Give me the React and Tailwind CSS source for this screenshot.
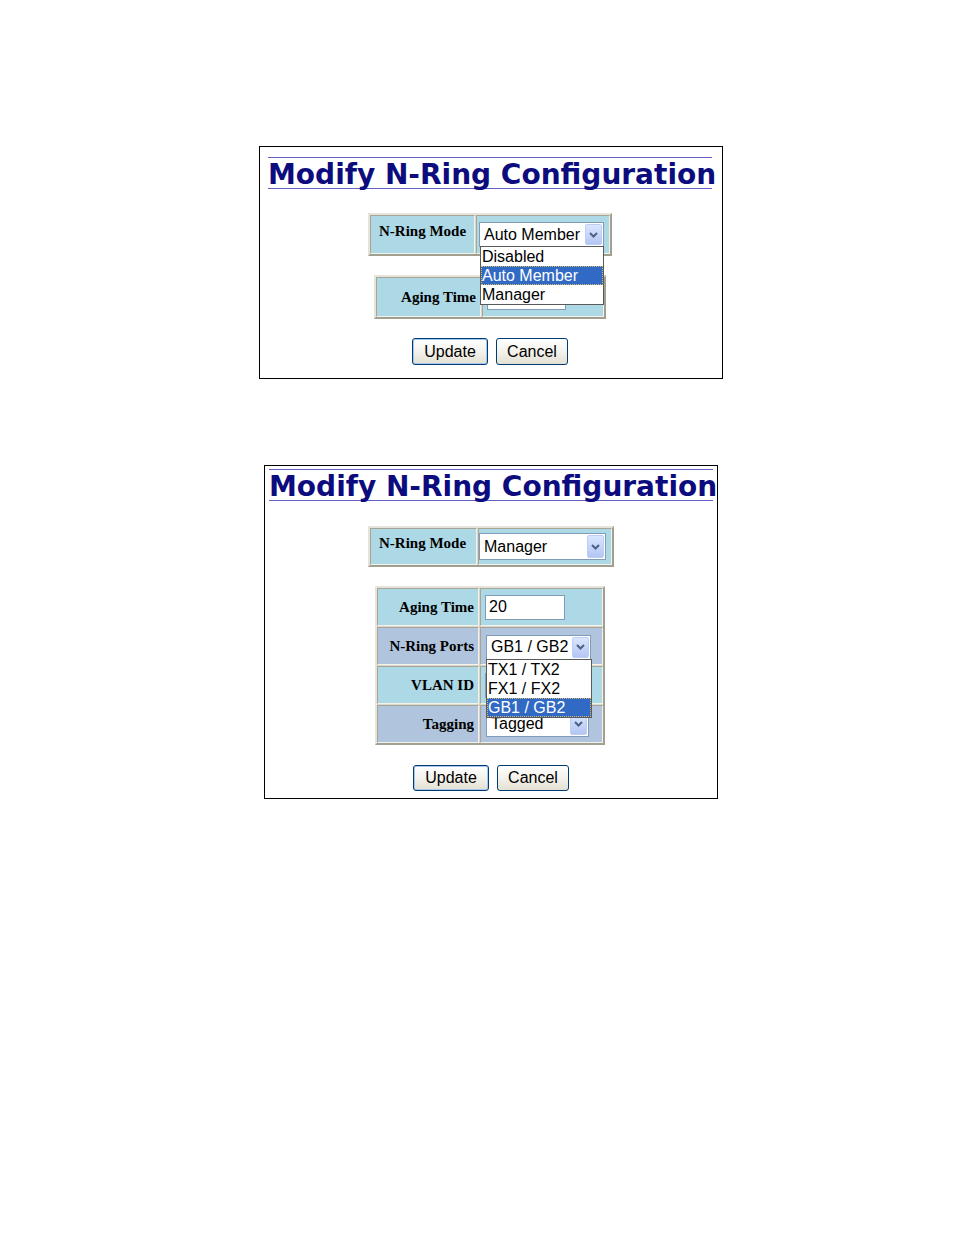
const SANS = "font-['Liberation_Sans',Arial,sans-serif]";
const SERIF = "font-['Liberation_Serif','Times_New_Roman',serif]";
const HEAD = "font-['DejaVu_Sans',Verdana,sans-serif]";

const BLUE = "bg-[#add8e6]";
const STEEL = "bg-[#b0c4de]";

function Heading({ className = "" }) {
  return (
    <h1
      className={`w-[444px] border-t border-b border-[#6262c6] pt-[4px] text-center ${HEAD} text-[28px] font-bold leading-[26px] text-[#0c0c7e] whitespace-nowrap ${className}`}
    >
      Modify N-Ring Configuration
    </h1>
  );
}

function Frame({ className = "", children }) {
  return (
    <div
      className={`border-2 border-t-[#e6e4da] border-l-[#e6e4da] border-r-[#a19f8f] border-b-[#a19f8f] bg-[#d9d7cb] ${className}`}
    >
      {children}
    </div>
  );
}

function Cell({ className = "", children }) {
  return (
    <div
      className={`border border-t-[#a7a595] border-l-[#a7a595] border-r-[#f2f1ea] border-b-[#f2f1ea] ${className}`}
    >
      {children}
    </div>
  );
}

function Label({ children }) {
  return (
    <span className={`${SERIF} text-[15px] font-bold leading-[18px] text-black whitespace-nowrap`}>
      {children}
    </span>
  );
}

function Chevron() {
  return (
    <svg width="9" height="6" viewBox="0 0 9 6">
      <path d="M1 1 L4.5 4.5 L8 1" fill="none" stroke="#4d6185" strokeWidth="2" />
    </svg>
  );
}

function Select({ className = "", value, children }) {
  return (
    <div className={`relative flex items-stretch border border-[#7f9db9] bg-white ${className}`}>
      <span className={`flex-1 self-center pl-[4px] ${SANS} text-[16px] leading-[18px] text-black whitespace-nowrap overflow-hidden`}>
        {value}
      </span>
      <span className="m-[1px] flex w-[17px] items-center justify-center rounded-[2px] border border-[#bccef7] bg-gradient-to-b from-[#dbe6fe] to-[#b3c6f4]">
        <Chevron />
      </span>
      {children}
    </div>
  );
}

function Dropdown({ className = "", items, active }) {
  return (
    <div className={`absolute top-full z-10 border border-[#5a5a5a] bg-white ${SANS} text-[16px] leading-[19px] ${className}`}>
      {items.map((item) => (
        <div
          key={item}
          className={`h-[19px] px-[1px] whitespace-nowrap ${
            item === active
              ? "bg-[#316ac5] text-white outline-1 outline-dotted outline-[#d9b870] -outline-offset-1"
              : "text-black"
          }`}
        >
          {item}
        </div>
      ))}
    </div>
  );
}

function TextInput({ className = "", value = "" }) {
  return (
    <div className={`flex items-center border border-[#7f9db9] bg-white pl-[3px] ${SANS} text-[16px] leading-[18px] text-black ${className}`}>
      {value}
    </div>
  );
}

function Buttons({ className = "" }) {
  const base = `flex items-center justify-center rounded-[3px] border border-[#003c74] bg-gradient-to-b from-[#ffffff] via-[#f3f2ec] to-[#e3e0d2] ${SANS} text-[16px] leading-none text-black`;
  return (
    <div className="flex gap-[8px]">
      <button type="button" className={`${base} w-[76px] shadow-[inset_0_0_0_1px_#a9c6ee] ${className}`}>
        Update
      </button>
      <button type="button" className={`${base} w-[72px] ${className}`}>
        Cancel
      </button>
    </div>
  );
}

function FirstPanel() {
  return (
    <div className="ml-[259px] flex h-[233px] w-[464px] flex-col items-start border border-black pt-[10px]">
      <Heading className="ml-[8px]" />

      <Frame className="ml-[108px] mt-[24px] flex h-[43px] w-[244px] gap-[1px]">
        <Cell className={`w-[105px] ${BLUE} pl-[8px] pt-[2px]`}>
          <Label>N-Ring Mode</Label>
        </Cell>
        <Cell className={`flex w-[134px] items-center ${BLUE} pl-[2px]`}>
          <Select className="h-[25px] w-[125px]" value="Auto Member">
            <Dropdown
              className="left-[0px] w-[124px]"
              items={["Disabled", "Auto Member", "Manager"]}
              active="Auto Member"
            />
          </Select>
        </Cell>
      </Frame>

      <Frame className="ml-[114px] mt-[19px] flex h-[44px] w-[232px] gap-[1px]">
        <Cell className={`flex w-[105px] items-center justify-end ${BLUE} pr-[4px]`}>
          <Label>Aging Time</Label>
        </Cell>
        <Cell className={`flex w-[122px] items-center ${BLUE} pl-[4px]`}>
          <TextInput className="h-[25px] w-[79px]" />
        </Cell>
      </Frame>

      <div className="ml-[152px] mt-[19px]">
        <Buttons className="h-[27px]" />
      </div>
    </div>
  );
}

const ROWS = [
  { label: "Aging Time", bg: BLUE },
  { label: "N-Ring Ports", bg: STEEL },
  { label: "VLAN ID", bg: BLUE },
  { label: "Tagging", bg: STEEL },
];

function SecondPanel() {
  return (
    <div className="ml-[264px] mt-[86px] flex h-[334px] w-[454px] flex-col items-start border border-black pt-[3px]">
      <Heading className="ml-[4px]" />

      <Frame className="ml-[103px] mt-[25px] flex h-[41px] w-[246px] gap-[1px]">
        <Cell className={`w-[107px] ${BLUE} pl-[8px] pt-[1px]`}>
          <Label>N-Ring Mode</Label>
        </Cell>
        <Cell className={`flex w-[134px] items-center ${BLUE} pl-[0px]`}>
          <Select className="h-[27px] w-[127px]" value="Manager" />
        </Cell>
      </Frame>

      <Frame className="ml-[110px] mt-[19px] flex w-[230px] flex-col gap-[1px]">
        {ROWS.map((row) => (
          <div key={row.label} className="flex h-[38px] gap-[1px]">
            <Cell className={`flex w-[102px] items-center justify-end ${row.bg} pr-[4px]`}>
              <Label>{row.label}</Label>
            </Cell>
            <Cell className={`relative flex w-[123px] items-center ${row.bg} pl-[4px]`}>
              {row.label === "Aging Time" && <TextInput className="h-[25px] w-[80px]" value="20" />}
              {row.label === "N-Ring Ports" && (
                <Select className="ml-[1px] mt-[2px] h-[25px] w-[105px]" value="GB1 / GB2">
                  <Dropdown
                    className="left-[-1px] w-[106px]"
                    items={["TX1 / TX2", "FX1 / FX2", "GB1 / GB2"]}
                    active="GB1 / GB2"
                  />
                </Select>
              )}
              {row.label === "VLAN ID" && <TextInput className="h-[25px] w-[80px]" />}
              {row.label === "Tagging" && (
                <Select className="ml-[1px] h-[26px] w-[103px]" value="Tagged" />
              )}
            </Cell>
          </div>
        ))}
      </Frame>

      <div className="ml-[148px] mt-[20px]">
        <Buttons className="h-[26px]" />
      </div>
    </div>
  );
}

export default function App() {
  return (
    <div className="min-h-[1235px] bg-white pt-[146px]">
      <FirstPanel />
      <SecondPanel />
    </div>
  );
}
